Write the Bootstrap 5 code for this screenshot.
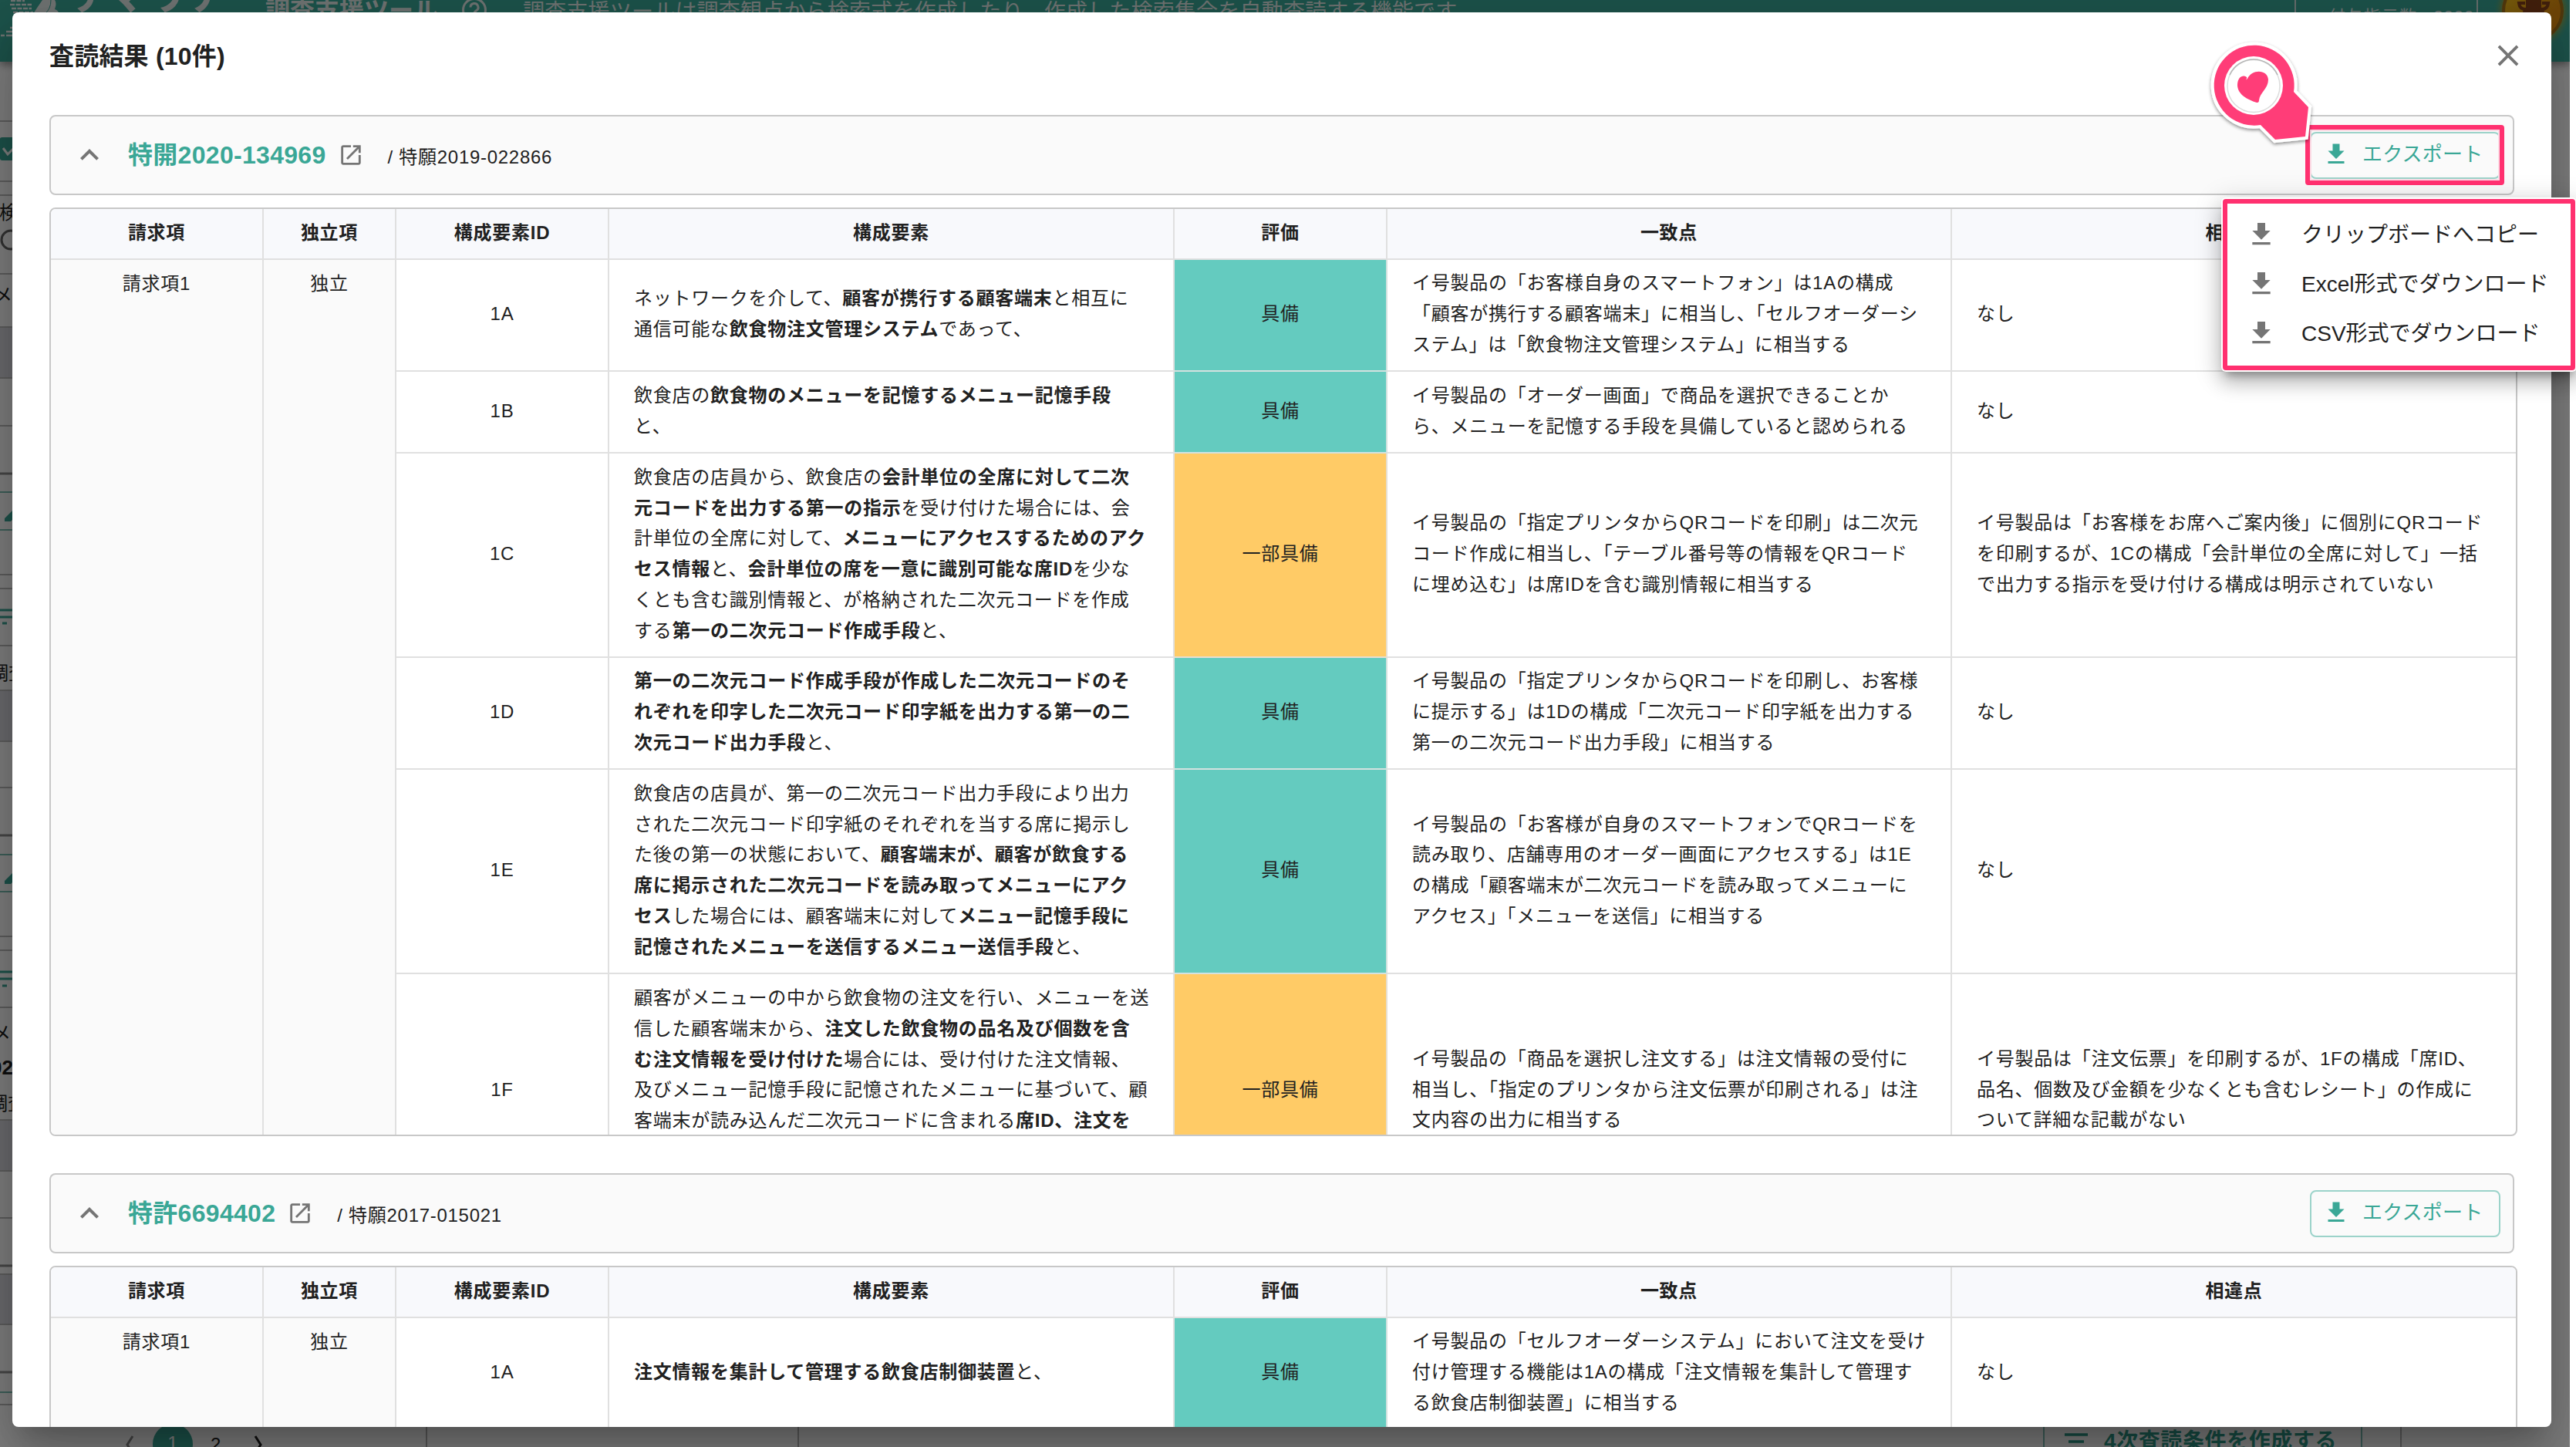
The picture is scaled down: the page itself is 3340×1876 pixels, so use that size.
<!DOCTYPE html>
<html lang="ja">
<head>
<meta charset="utf-8">
<title>調査支援ツール</title>
<link rel="stylesheet" href="https://cdn.jsdelivr.net/npm/bootstrap@5.3.0/dist/css/bootstrap.min.css">
<style>
:root{--teal:#3aa796;--ink:#212121;--line:#e0e0e0;--edge:#c8c8c8;--pink:#ff306f}
html,body{width:3340px;height:1876px;overflow:hidden;background:#fff}
body{font-family:"Liberation Sans","Noto Sans CJK JP",sans-serif;color:var(--ink);font-size:24px;text-spacing-trim:normal}
svg{display:block;flex:none}
/* page behind the dialog */
.app-page{width:3332px;height:1876px;overflow:hidden;background:#fff}
.app-bar{height:80px;background:var(--teal);color:#dfe6e5;box-shadow:0 4px 10px rgba(0,0,0,.4);white-space:nowrap;position:relative}
.app-bar>*{height:32px}
.brand-name{font-size:54px;font-weight:700;line-height:10px;margin-left:2px;margin-top:-11px;width:262px;letter-spacing:0}
.tool-name{font-size:32px;font-weight:700;line-height:28px;width:254px}
.tool-desc{font-size:28px;letter-spacing:.2px;line-height:31px;flex:1}
.points{width:238px;height:80px!important;border:solid #cfdcda;border-width:0 2px;font-size:22px;line-height:44px;letter-spacing:1px;padding-left:42px}
.app-rail{height:1770px}
.app-foot{height:26px;margin-left:0}
.foot-col{height:26px;border-right:2px solid #b5b5b5;overflow:hidden}
.pager-num{width:52px;height:52px;border-radius:50%;background:var(--teal);color:#fff;line-height:50px;text-align:center}
.foot-btn{width:414px;height:26px;border:solid #7cbfb5;border-width:0 2px;color:#2e9a89;font-size:28px;font-weight:700;line-height:37px;letter-spacing:.6px;white-space:nowrap}
.dim{position:absolute;left:0;top:0;width:3332px;height:1876px;background:rgba(0,0,0,.5)}
/* dialog */
.dialog-wrap{position:absolute;left:0;top:0;width:3332px;height:1876px;overflow:hidden;padding:16px 24px 26px 16px}
.dialog-box{height:1834px;background:#fff;border-radius:8px;padding:0 0 0 48px;overflow:hidden}
.dialog-shadow{height:1834px;border-radius:8px;box-shadow:0 22px 30px -14px rgba(0,0,0,.2),0 48px 76px 6px rgba(0,0,0,.14),0 18px 92px 16px rgba(0,0,0,.12)}
.dialog-head{height:133px;padding:33px 33px 0 0}
.dialog-title{font-size:32px;font-weight:700;line-height:48px;letter-spacing:.2px;margin:0}
.bar-card{width:3196px;height:104px;border:2px solid var(--edge);border-radius:8px;background:#fafafa;padding:0 16px 0 26px}
.doc-no{font-size:32px;font-weight:700;color:var(--teal);letter-spacing:.3px;line-height:48px;margin-left:26px;white-space:nowrap}
.app-no{letter-spacing:.72px;line-height:40px;padding-top:6px;margin-left:31px;white-space:nowrap}
.export-btn{width:247px;height:61px;border:2px solid #9cd3ca;border-radius:8px;color:var(--teal);font-size:26px;letter-spacing:.2px;padding:0 0 2px 14px;background:transparent;white-space:nowrap}
.grid-box{width:3200px;height:1204px;border:2px solid var(--edge);border-radius:8px;overflow:hidden;margin-top:16px;margin-bottom:48px}
.claims{width:3196px;table-layout:fixed;border-collapse:separate;border-spacing:0;margin:0;color:var(--ink);font-size:24px;letter-spacing:.75px;line-height:39.75px}
.claims th,.claims td{border:0 solid var(--line);border-width:0 2px 2px 0;padding:0 0 3px 32px;vertical-align:middle;white-space:nowrap}
.claims th{height:66px;background:#f8f9fc;text-align:center;padding:0 0 2px;font-weight:700}
.claims tr>:last-child{border-right:0}
.claims td.ctr{text-align:center;padding:0 0 3px}
.claims td.span-cell{text-align:center;vertical-align:top;background:#fafafa;padding:11px 0 0}
.claims td.yes{background:#64cbbf;text-align:center;padding:0 0 3px;border-color:#d3e2df}
.claims td.part{background:#ffcb66;text-align:center;padding:0 0 3px;border-color:#e6dfd0}
.claims td.top-cell{vertical-align:top;padding-top:11px}
/* overlays */
.ring{position:absolute;left:2989px;top:162px;width:258px;height:78px;border:6px solid var(--pink);border-radius:4px;box-shadow:inset 0 0 0 2px #fbdbe5}
.export-menu{position:absolute;left:2882px;top:258px;width:457px;height:222px;border:6px solid var(--pink);border-radius:4px;background:#fff;box-shadow:0 0 0 2px #fff,0 10px 10px -4px rgba(0,0,0,.28),0 14px 24px 2px rgba(0,0,0,.2),0 6px 34px 6px rgba(0,0,0,.14);padding:8px 0 0 24px;font-size:28px;white-space:nowrap}
.export-menu .menu-line{height:64px;line-height:62px}
.export-menu .menu-line span{margin-left:32px;padding-top:1px}
.pin{position:absolute;left:2860px;top:50px}
</style>
<script src="https://cdn.jsdelivr.net/npm/bootstrap@5.3.0/dist/js/bootstrap.bundle.min.js"></script>
</head>
<body>
<svg width="0" height="0" class="position-absolute">
  <symbol id="i-get" viewBox="0 0 24 24"><path fill="currentColor" d="M19 9h-4V3H9v6H5l7 7 7-7zM5 18v2h14v-2H5z"/></symbol>
  <symbol id="i-up" viewBox="0 0 24 24"><path fill="#757575" d="M12 8l-6 6 1.41 1.41L12 10.83l4.59 4.58L18 14z"/></symbol>
  <symbol id="i-open" viewBox="0 0 24 24"><path fill="#757575" d="M19 19H5V5h7V3H5c-1.11 0-2 .9-2 2v14c0 1.1.89 2 2 2h14c1.1 0 2-.9 2-2v-7h-2v7zM14 3v2h3.59l-9.83 9.83 1.41 1.41L19 6.41V10h2V3h-7z"/></symbol>
  <symbol id="i-x" viewBox="0 0 24 24"><path fill="#757575" d="M19 6.41L17.59 5 12 10.59 6.41 5 5 6.41 10.59 12 5 17.59 6.41 19 12 13.41 17.59 19 19 17.59 13.41 12z"/></symbol>
</svg>

<div class="app-page d-flex flex-column">
  <header class="app-bar d-flex align-items-start">
    <svg width="80" height="60" viewBox="0 0 80 60" style="height:60px"><g stroke="#dfe6e5" stroke-width="2.6"><path d="M14 1h18M13 6h28M15 11h26M17 16h26" stroke-dasharray="6 1.5"/><path d="M13 36h3M8 41h8M1 46h5M8 46h8" /></g><path fill="#dfe6e5" d="M55 0Q48 10 43 18h34q-2-5-6-6Q74 4 71 0z"/><path d="M66 0q0 12-8 18" stroke="#3aa796" fill="none"/></svg>
    <div class="brand-name">サマリア</div>
    <div class="tool-name">調査支援ツール</div>
    <svg width="34" height="34" viewBox="0 0 34 34" style="height:34px;margin-top:-4px"><circle cx="17" cy="17" r="14.5" fill="none" stroke="#dfe6e5" stroke-width="3"/><path d="M12 13.500a5 5 0 1 1 7.500 4.300q-2.500 1.500-2.500 4M17 24v3" fill="none" stroke="#dfe6e5" stroke-width="3"/></svg>
    <div class="tool-desc" style="margin-left:46px">調査支援ツールは調査観点から検索式を作成したり、作成した検索集合を自動査読する機能です</div>
    <div class="points">付与指示数 : 2000</div>
    <svg width="119" height="80" viewBox="0 0 119 80" style="height:80px"><defs><radialGradient id="glow"><stop offset=".75" stop-color="#c7a21e" stop-opacity=".6"/><stop offset="1" stop-color="#3aa796" stop-opacity="0"/></radialGradient><linearGradient id="gold" x2="1" y2="1"><stop offset="0" stop-color="#f0c51c"/><stop offset=".7" stop-color="#df8a10"/></linearGradient></defs><circle cx="71" cy="14" r="52" fill="url(#glow)"/><circle cx="71" cy="14" r="38" fill="url(#gold)" stroke="#a3701a" stroke-width="4"/><path fill="#84401a" d="M62 0h20v10q4 2 4 6H58q0-4 4-6z"/><path d="M64 12q-10 1-11-8h8M80 12q10 1 11-8h-8" fill="none" stroke="#84401a" stroke-width="4"/></svg>
  </header>
  <svg class="app-rail" width="3332" height="1770" viewBox="0 80 3332 1770">
    <g fill="#d8d9de"><path d="M0 424h16v66H0zM0 895h16v66H0zM0 1452h16v66H0zM0 1652h16v65H0z"/></g>
    <path stroke="#bdbdbd" stroke-width="2" d="M0 157h16M0 235h16M0 253h16M0 355h16M0 424h16M0 490h16M0 552h16M0 745h16M0 763h16M0 837h16M0 895h16M0 961h16M0 1021h16M0 1214h16M0 1232h16M0 1306h16M0 1452h16M0 1518h16M0 1579h16M0 1652h16M0 1717h16M0 1821h16"/>
    <path stroke="#909090" stroke-width="3" d="M0 614h16M0 1083h16M0 1641h16M0 1779h16"/>
    <path stroke="#7cc0b5" stroke-width="2" d="M0 638h16M0 687h16M0 1108h16M0 1156h16M0 1805h16"/>
    <path stroke="#3aa796" stroke-width="3" d="M0 791h16M0 800h16M3 808h6M0 1260h16M0 1269h16M3 1278h6"/>
    <path fill="#3aa796" d="M6 676v-4l10-10v12l-2 2zM6 1146v-4l10-10v12l-2 2zM0 180q0-2 3-2h13v30H3q-3 0-3-3z"/>
    <path d="M4 192l6 8 8-8" fill="none" stroke="#fff" stroke-width="3"/>
    <circle cx="14" cy="311" r="12" fill="none" stroke="#666" stroke-width="3"/>
    <g font-size="24" fill="#212121" font-family="Liberation Sans,Noto Sans CJK JP,sans-serif"><text x="-1" y="284">検</text><text x="-8" y="391">メモ</text><text x="-13" y="881">調査</text><text x="-10" y="1348">メモ</text><text x="-14" y="1439">調査</text><text x="-12" y="1393" font-weight="700" font-size="26">02</text></g>
  </svg>
  <footer class="app-foot d-flex">
    <div class="foot-col d-flex" style="width:554px;padding-left:160px">
      <svg width="38" height="40" viewBox="0 0 38 40"><path d="M12 12l-7 11 7 11" fill="none" stroke="#8a8a8a" stroke-width="3"/></svg>
      <div class="pager-num flex-shrink-0" style="margin-top:-4px">1</div>
      <div style="line-height:46px;margin-left:23px;width:32px">2</div>
      <svg width="38" height="40" viewBox="0 0 38 40"><path d="M26 12l7 11-7 11" fill="none" stroke="#212121" stroke-width="3"/></svg>
    </div>
    <div class="foot-col" style="width:482px"></div>
    <div class="foot-col d-flex justify-content-end" style="width:2078px;padding-right:49px">
      <div class="foot-btn d-flex"><svg width="51" height="26" viewBox="0 0 51 26" style="margin-left:26px"><path d="M0 10h30M5 19h20M11 28h8" stroke="#2e9a89" stroke-width="3.500"/></svg>4次査読条件を作成する</div>
    </div>
  </footer>
</div>
<div class="dim"></div>

<div class="dialog-wrap"><div class="dialog-shadow">
<main class="dialog-box">
  <div class="dialog-head d-flex justify-content-between align-items-start">
    <h1 class="dialog-title">査読結果 (10件)</h1>
    <svg width="46" height="46"><use href="#i-x"/></svg>
  </div>

  <section>
    <div class="bar-card d-flex align-items-center">
      <svg width="48" height="48"><use href="#i-up"/></svg>
      <a class="doc-no text-decoration-none">特開2020-134969</a>
      <svg width="34" height="34" style="margin-left:15px"><use href="#i-open"/></svg>
      <span class="app-no">/ 特願2019-022866</span>
      <button class="export-btn d-flex align-items-center ms-auto"><svg width="36" height="36" style="margin-right:16px"><use href="#i-get"/></svg>エクスポート</button>
    </div>
    <div class="grid-box">
      <table class="claims">
        <colgroup><col style="width:276px"><col style="width:172px"><col style="width:276px"><col style="width:733px"><col style="width:276px"><col style="width:732px"><col></colgroup>
        <thead><tr><th>請求項</th><th>独立項</th><th>構成要素ID</th><th>構成要素</th><th>評価</th><th>一致点</th><th>相違点</th></tr></thead>
        <tbody>
          <tr style="height:145px"><td class="span-cell" rowspan="6">請求項1</td><td class="span-cell" rowspan="6">独立</td><td class="ctr">1A</td>
            <td>ネットワークを介して、<b>顧客が携行する顧客端末</b>と相互に<br>通信可能な<b>飲食物注文管理システム</b>であって、</td><td class="yes">具備</td>
            <td>イ号製品の「お客様自身のスマートフォン」は1Aの構成<br>「顧客が携行する顧客端末」に相当し、「セルフオーダーシ<br>ステム」は「飲食物注文管理システム」に相当する</td><td>なし</td></tr>
          <tr style="height:106px"><td class="ctr">1B</td>
            <td>飲食店の<b>飲食物のメニューを記憶するメニュー記憶手段</b><br>と、</td><td class="yes">具備</td>
            <td>イ号製品の「オーダー画面」で商品を選択できることか<br>ら、メニューを記憶する手段を具備していると認められる</td><td>なし</td></tr>
          <tr style="height:265px"><td class="ctr">1C</td>
            <td>飲食店の店員から、飲食店の<b>会計単位の全席に対して二次<br>元コードを出力する第一の指示</b>を受け付けた場合には、会<br>計単位の全席に対して、<b>メニューにアクセスするためのアク<br>セス情報</b>と、<b>会計単位の席を一意に識別可能な席ID</b>を少な<br>くとも含む識別情報と、が格納された二次元コードを作成<br>する<b>第一の二次元コード作成手段</b>と、</td><td class="part">一部具備</td>
            <td>イ号製品の「指定プリンタからQRコードを印刷」は二次元<br>コード作成に相当し、「テーブル番号等の情報をQRコード<br>に埋め込む」は席IDを含む識別情報に相当する</td>
            <td>イ号製品は「お客様をお席へご案内後」に個別にQRコード<br>を印刷するが、1Cの構成「会計単位の全席に対して」一括<br>で出力する指示を受け付ける構成は明示されていない</td></tr>
          <tr style="height:145px"><td class="ctr">1D</td>
            <td><b>第一の二次元コード作成手段が作成した二次元コードのそ<br>れぞれを印字した二次元コード印字紙を出力する第一の二<br>次元コード出力手段</b>と、</td><td class="yes">具備</td>
            <td>イ号製品の「指定プリンタからQRコードを印刷し、お客様<br>に提示する」は1Dの構成「二次元コード印字紙を出力する<br>第一の二次元コード出力手段」に相当する</td><td>なし</td></tr>
          <tr style="height:265px"><td class="ctr">1E</td>
            <td>飲食店の店員が、第一の二次元コード出力手段により出力<br>された二次元コード印字紙のそれぞれを当する席に掲示し<br>た後の第一の状態において、<b>顧客端末が、顧客が飲食する<br>席に掲示された二次元コードを読み取ってメニューにアク<br>セス</b>した場合には、顧客端末に対して<b>メニュー記憶手段に<br>記憶されたメニューを送信するメニュー送信手段</b>と、</td><td class="yes">具備</td>
            <td>イ号製品の「お客様が自身のスマートフォンでQRコードを<br>読み取り、店舗専用のオーダー画面にアクセスする」は1E<br>の構成「顧客端末が二次元コードを読み取ってメニューに<br>アクセス」「メニューを送信」に相当する</td><td>なし</td></tr>
          <tr style="height:304px"><td class="ctr">1F</td>
            <td class="top-cell">顧客がメニューの中から飲食物の注文を行い、メニューを送<br>信した顧客端末から、<b>注文した飲食物の品名及び個数を含<br>む注文情報を受け付けた</b>場合には、受け付けた注文情報、<br>及びメニュー記憶手段に記憶されたメニューに基づいて、顧<br>客端末が読み込んだ二次元コードに含まれる<b>席ID、注文を</b></td><td class="part">一部具備</td>
            <td>イ号製品の「商品を選択し注文する」は注文情報の受付に<br>相当し、「指定のプリンタから注文伝票が印刷される」は注<br>文内容の出力に相当する</td>
            <td>イ号製品は「注文伝票」を印刷するが、1Fの構成「席ID、<br>品名、個数及び金額を少なくとも含むレシート」の作成に<br>ついて詳細な記載がない</td></tr>
        </tbody>
      </table>
    </div>
  </section>

  <section>
    <div class="bar-card d-flex align-items-center">
      <svg width="48" height="48"><use href="#i-up"/></svg>
      <a class="doc-no text-decoration-none">特許6694402</a>
      <svg width="34" height="34" style="margin-left:15px"><use href="#i-open"/></svg>
      <span class="app-no">/ 特願2017-015021</span>
      <button class="export-btn d-flex align-items-center ms-auto"><svg width="36" height="36" style="margin-right:16px"><use href="#i-get"/></svg>エクスポート</button>
    </div>
    <div class="grid-box">
      <table class="claims">
        <colgroup><col style="width:276px"><col style="width:172px"><col style="width:276px"><col style="width:733px"><col style="width:276px"><col style="width:732px"><col></colgroup>
        <thead><tr><th>請求項</th><th>独立項</th><th>構成要素ID</th><th>構成要素</th><th>評価</th><th>一致点</th><th>相違点</th></tr></thead>
        <tbody>
          <tr style="height:145px"><td class="span-cell">請求項1</td><td class="span-cell">独立</td><td class="ctr">1A</td>
            <td><b>注文情報を集計して管理する飲食店制御装置</b>と、</td><td class="yes">具備</td>
            <td>イ号製品の「セルフオーダーシステム」において注文を受け<br>付け管理する機能は1Aの構成「注文情報を集計して管理す<br>る飲食店制御装置」に相当する</td><td>なし</td></tr>
        </tbody>
      </table>
    </div>
  </section>
</main></div></div>

<div class="export-menu">
  <div class="menu-line d-flex align-items-center"><svg width="40" height="40" style="color:#757575"><use href="#i-get"/></svg><span>クリップボードへコピー</span></div>
  <div class="menu-line d-flex align-items-center"><svg width="40" height="40" style="color:#757575"><use href="#i-get"/></svg><span>Excel形式でダウンロード</span></div>
  <div class="menu-line d-flex align-items-center"><svg width="40" height="40" style="color:#757575"><use href="#i-get"/></svg><span>CSV形式でダウンロード</span></div>
</div>
<div class="ring"></div>
<svg class="pin" width="150" height="145" viewBox="2860 50 150 145">
  <defs><filter id="sh" x="-20%" y="-20%" width="140%" height="140%"><feDropShadow dx="0" dy="2" stdDeviation="2" flood-opacity=".45"/></filter></defs>
  <g filter="url(#sh)"><path d="M2931 162A52 52 0 1 1 2974 119L2993 139L2989 177L2950 181Z" fill="#fff" stroke="#fff" stroke-width="8"/></g>
  <path d="M2931 162A52 52 0 1 1 2974 119L2993 139L2989 177L2950 181Z" fill="#ff3d78"/>
  <circle cx="2922" cy="111" r="38" fill="#fff"/>
  <circle cx="2922" cy="111.500" r="34" fill="#fff" stroke="#dcdcdc" stroke-width="1.500"/>
  <path d="M2891 97A34 34 0 0 1 2953 97" fill="none" stroke="#b5b5b5" stroke-width="1.500"/>
  <path fill="#ff3d78" d="M2912 103.500C2914 101 2914 99 2909 98.500C2903 99 2901 105 2901 111C2902 123 2914 129 2926 133Q2929 133.500 2929 130C2930 120 2941 115 2941 103C2940 90 2920 89 2914 102Z"/>
</svg>
</body>
</html>
